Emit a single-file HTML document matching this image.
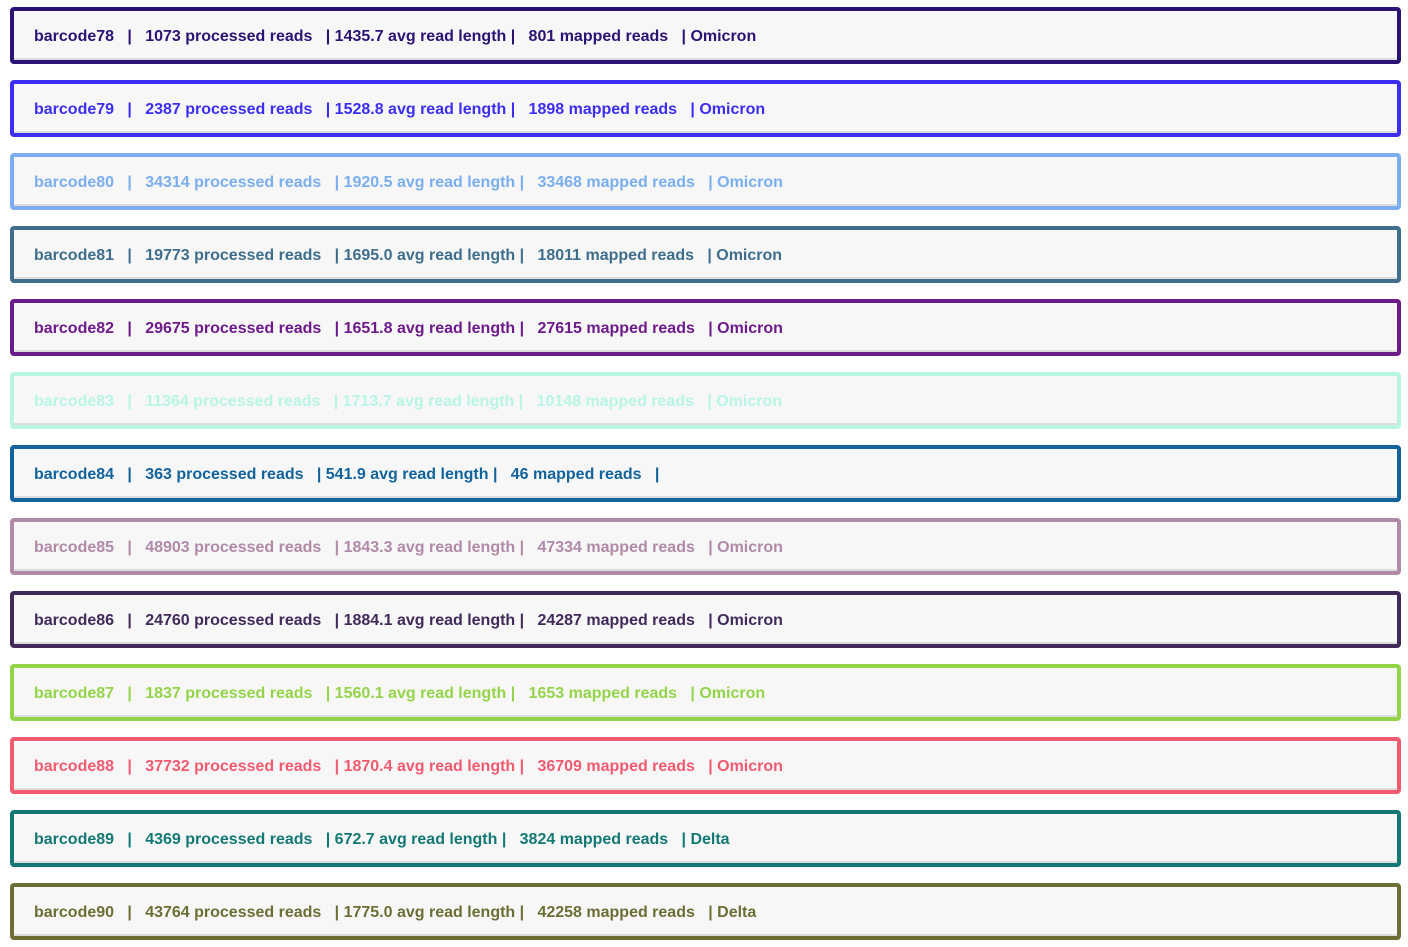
<!DOCTYPE html>
<html><head><style>
body{margin:0;background:#fff;font-family:"Liberation Sans",sans-serif;}
.r{position:absolute;left:10px;height:49px;border:4px solid;border-radius:4px;background:#f7f7f7;box-shadow:inset 0 -2px 0 #ddd;font-weight:bold;font-size:16px;line-height:51px;white-space:pre;padding-left:20px;box-sizing:content-box;width:1363px;}
</style></head><body>
<div class="r" style="top:7px;border-color:#2c1275;color:#2c1275">barcode78   |   1073 processed reads   | 1435.7 avg read length |   801 mapped reads   | Omicron</div>
<div class="r" style="top:80px;border-color:#3b2ef2;color:#3b2ef2">barcode79   |   2387 processed reads   | 1528.8 avg read length |   1898 mapped reads   | Omicron</div>
<div class="r" style="top:153px;border-color:#7aaef0;color:#7aaef0">barcode80   |   34314 processed reads   | 1920.5 avg read length |   33468 mapped reads   | Omicron</div>
<div class="r" style="top:226px;border-color:#3f6e8c;color:#3f6e8c">barcode81   |   19773 processed reads   | 1695.0 avg read length |   18011 mapped reads   | Omicron</div>
<div class="r" style="top:299px;border-color:#6d1a8a;color:#6d1a8a">barcode82   |   29675 processed reads   | 1651.8 avg read length |   27615 mapped reads   | Omicron</div>
<div class="r" style="top:372px;border-color:#b8f5e4;color:#b8f5e4">barcode83   |   11364 processed reads   | 1713.7 avg read length |   10148 mapped reads   | Omicron</div>
<div class="r" style="top:445px;border-color:#12639c;color:#12639c">barcode84   |   363 processed reads   | 541.9 avg read length |   46 mapped reads   |</div>
<div class="r" style="top:518px;border-color:#b08aa8;color:#b08aa8">barcode85   |   48903 processed reads   | 1843.3 avg read length |   47334 mapped reads   | Omicron</div>
<div class="r" style="top:591px;border-color:#41295a;color:#41295a">barcode86   |   24760 processed reads   | 1884.1 avg read length |   24287 mapped reads   | Omicron</div>
<div class="r" style="top:664px;border-color:#94d44a;color:#94d44a">barcode87   |   1837 processed reads   | 1560.1 avg read length |   1653 mapped reads   | Omicron</div>
<div class="r" style="top:737px;border-color:#f25a70;color:#f25a70">barcode88   |   37732 processed reads   | 1870.4 avg read length |   36709 mapped reads   | Omicron</div>
<div class="r" style="top:810px;border-color:#137874;color:#137874">barcode89   |   4369 processed reads   | 672.7 avg read length |   3824 mapped reads   | Delta</div>
<div class="r" style="top:883px;border-color:#6d6e35;color:#6d6e35">barcode90   |   43764 processed reads   | 1775.0 avg read length |   42258 mapped reads   | Delta</div>
</body></html>
